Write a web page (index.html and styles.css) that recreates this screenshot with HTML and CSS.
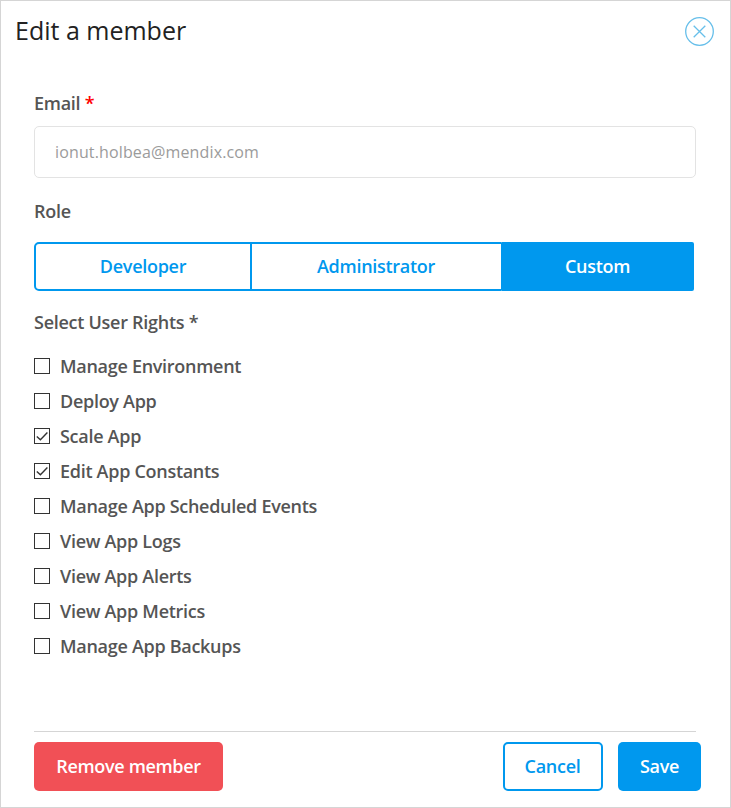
FILE: index.html
```html
<!DOCTYPE html>
<html lang="en">
<head>
<meta charset="utf-8">
<title>Edit a member</title>
<link rel="stylesheet" href="styles.css">
</head>
<body>
<main class="dialog">
  <header class="dialog-header">
    <h1>Edit a member</h1>
    <button class="close" aria-label="Close"><svg width="29" height="29" viewBox="0 0 29 29"><circle cx="14.5" cy="14.5" r="13.8"/><path d="M8.7 8.7l11.6 11.6M20.3 8.7L8.7 20.3"/></svg></button>
  </header>
  <form class="form">
    <label class="label" for="email">Email <span class="required">*</span></label>
    <input class="email" id="email" value="ionut.holbea@mendix.com" readonly>
    <div class="label role-label">Role</div>
    <div class="roles">
      <button type="button" class="role developer">Developer</button>
      <button type="button" class="role administrator">Administrator</button>
      <button type="button" class="role selected">Custom</button>
    </div>
    <div class="label rights-label">Select User Rights *</div>
    <ul class="rights">
      <li><span class="box"></span><span>Manage Environment</span></li>
      <li><span class="box"></span><span>Deploy App</span></li>
      <li><span class="box"><svg viewBox="0 0 14 14"><path d="M1.8 7.4l3.6 3.4L12.4 3.6"/></svg></span><span>Scale App</span></li>
      <li><span class="box"><svg viewBox="0 0 14 14"><path d="M1.8 7.4l3.6 3.4L12.4 3.6"/></svg></span><span>Edit App Constants</span></li>
      <li><span class="box"></span><span>Manage App Scheduled Events</span></li>
      <li><span class="box"></span><span>View App Logs</span></li>
      <li><span class="box"></span><span>View App Alerts</span></li>
      <li><span class="box"></span><span>View App Metrics</span></li>
      <li><span class="box"></span><span>Manage App Backups</span></li>
    </ul>
  </form>
  <footer class="footer">
    <button class="btn danger">Remove member</button>
    <button class="btn outline">Cancel</button>
    <button class="btn primary">Save</button>
  </footer>
</main>
</body>
</html>
```
FILE: styles.css
```css
* { box-sizing: border-box; }
body { margin: 0; background: #fff; font-family: "Open Sans", sans-serif; }
button, input { font: inherit; margin: 0; padding: 0; }
.dialog { width: 731px; height: 808px; border: 1px solid #d5d5d5; display: flex; flex-direction: column; }
.dialog-header { display: flex; justify-content: space-between; align-items: flex-start; height: 60px; padding: 12px 16px 0 14px; }
h1 { margin: 0; font-size: 25px; font-weight: 400; line-height: 34px; color: #222; }
.close { border: 0; background: none; width: 29px; height: 29px; margin-top: 4px; }
.close svg { display: block; fill: none; stroke: #67bfea; stroke-width: 1.3; }
.form { padding: 30px 34px 0 33px; flex: 1; display: flex; flex-direction: column; }
.label { font-size: 18px; line-height: 24px; font-weight: 600; color: #555; letter-spacing: -.27px; }
.required { color: #f00; }
.email { height: 52px; margin-top: 11px; padding: 0 20px; border: 1px solid #e3e3e3; border-radius: 5px; color: #9b9b9b; font-size: 16px; letter-spacing: .14px; }
.role-label { margin-top: 21px; }
.roles { display: flex; height: 49px; width: 660px; margin-top: 19px; }
.role { border: 2px solid #0098ee; background: #fff; color: #0098ee; font-size: 18px; font-weight: 600; letter-spacing: -.28px; padding-bottom: 2px; }
.developer { width: 218px; border-radius: 5px 0 0 5px; }
.administrator { width: 249px; border-left: 0; border-right: 0; padding-right: 1px; }
.selected { width: 193px; background: #0098ee; color: #fff; border-radius: 1px 2px 2px 1px; }
.rights-label { margin-top: 19px; }
.rights { list-style: none; margin: 14px 0 0; padding: 0; color: #555; font-size: 18px; font-weight: 600; letter-spacing: -.29px; }
.rights li { display: flex; align-items: center; gap: 10px; height: 35px; }
.box { width: 16px; height: 16px; border: 1px solid #333; }
.box svg { display: block; fill: none; stroke: #333; stroke-width: 1.4; }
.footer { display: flex; height: 76px; margin: 0 34px 0 33px; padding-top: 10px; border-top: 1px solid #d5d5d5; }
.btn { height: 49px; flex: none; border: 0; border-radius: 5px; font-size: 18px; font-weight: 600; color: #fff; letter-spacing: -.28px; padding-bottom: 2px; }
.danger { width: 189px; background: #f15056; margin-right: 280px; letter-spacing: -.33px; }
.outline { width: 100px; background: #fff; color: #0098ee; border: 2px solid #0098ee; margin-right: 15px; padding-right: 1px; }
.primary { width: 83px; background: #0098ee; }
```
